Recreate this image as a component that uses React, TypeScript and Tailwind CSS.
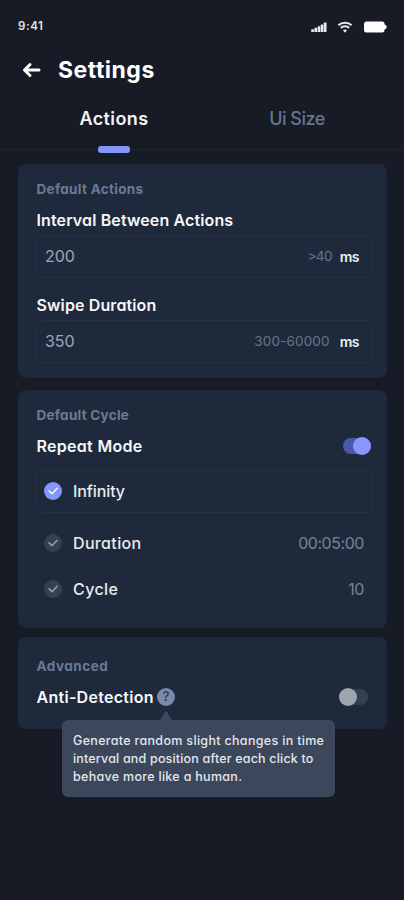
import type { ReactNode } from "react";

function StatusBar() {
  return (
    <div className="flex h-[54px] items-center pl-[18px] pr-[17px]">
      <span className="text-[11.5px] font-semibold tracking-[0.6px] text-[#e4e6ea]">9:41</span>
      <div className="ml-auto flex items-center">
        <svg width="16" height="12" viewBox="0 0 16 12" fill="#e8e9ec" className="mr-[10px]">
          <rect x="0.2" y="8.2" width="2.7" height="2.8" rx="0.6" />
          <rect x="3.4" y="6.8" width="2.7" height="4.2" rx="0.6" />
          <rect x="6.6" y="5.3" width="2.7" height="5.7" rx="0.6" />
          <rect x="9.7" y="3.6" width="2.7" height="7.4" rx="0.6" />
          <rect x="12.8" y="1.6" width="2.7" height="9.4" rx="0.6" />
        </svg>
        <svg width="16" height="12" viewBox="0 0 16 12" fill="none" stroke="#e8e9ec" strokeWidth="2.2" className="mr-[11px]">
          <path d="M1.4 4.300C5 .9 11 .9 14.600 4.300" />
          <path d="M3.900 6.900c2.300-2.200 5.900-2.200 8.200 0" />
          <path d="M8 11.700 5.900 9.300c1.200-1.100 3-1.100 4.200 0z" fill="#e8e9ec" stroke="none" />
        </svg>
        <svg width="23" height="12" viewBox="0 0 23 12" fill="#ffffff">
          <rect x="0" y="0.5" width="20.5" height="11" rx="2.5" />
          <path d="M20 3.500c2 .3 2.700 1.300 2.700 2.500s-.7 2.200-2.700 2.500z" />
        </svg>
      </div>
    </div>
  );
}

function Card({ className, children }: { className: string; children: ReactNode }) {
  return (
    <section className={`mx-[18px] w-[369px] rounded-[8px] bg-[#1e2a3b] px-[18px] ${className}`}>
      {children}
    </section>
  );
}

function Label({ className, children }: { className: string; children: ReactNode }) {
  return (
    <h2 className={`flex h-5 items-center whitespace-nowrap pl-[0.5px] text-[13.5px] font-bold text-[#6b7a93] ${className}`}>
      {children}
    </h2>
  );
}

function Title({ className, children }: { className: string; children: ReactNode }) {
  return (
    <span className={`whitespace-nowrap pl-[0.5px] text-[16px] leading-6 font-semibold text-[#f6f7f9] ${className}`}>{children}</span>
  );
}

function Field({ value, hint, hintClass }: { value: string; hint: string; hintClass: string }) {
  return (
    <div className="flex h-[43px] w-[337px] items-center rounded-[6px] border border-[#243143] pb-px pl-[8px] pr-[13px]">
      <span className="text-[16px] tracking-[-0.1px] text-[#9ca6b7]">{value}</span>
      <span className={`ml-auto pt-px text-[13.5px] text-[#66748c] ${hintClass}`}>{hint}</span>
      <span className="pt-px text-[14px] font-semibold tracking-[-0.5px] text-[#eef0f3]">ms</span>
    </div>
  );
}

function Tick({ active }: { active?: boolean }) {
  return (
    <svg width="18" height="18" viewBox="0 0 18 18" className="mr-[11px] shrink-0">
      <circle cx="9" cy="9" r="9" fill={active ? "#8296fb" : "#344150"} />
      <path
        d="M5 8.900 8 11.800 13.200 6.300"
        fill="none"
        stroke={active ? "#f4f6ff" : "#98a1ab"}
        strokeWidth="1.5"
        strokeLinecap="round"
        strokeLinejoin="round"
      />
    </svg>
  );
}

function Option({ name, nameClass, value, active, className }: {
  name: string;
  nameClass: string;
  value?: string;
  active?: boolean;
  className: string;
}) {
  return (
    <div className={`flex w-[337px] items-center rounded-[6px] border pl-[7px] pr-[8px] ${className}`}>
      <Tick active={active} />
      <span className={`text-[16px] font-medium text-[#e9ecf0] ${nameClass}`}>{name}</span>
      <span className="ml-auto text-[16px] tracking-[-0.45px] text-[#75839a]">{value}</span>
    </div>
  );
}

function Switch({ on }: { on?: boolean }) {
  return on ? (
    <div className="ml-auto mr-[-2px] flex h-[16px] w-[28px] items-center justify-end rounded-full bg-[#4a58a8]">
      <span className="h-[18px] w-[18px] shrink-0 rounded-full bg-[#8797fc]" />
    </div>
  ) : (
    <div className="ml-auto mr-[1px] flex h-[16px] w-[29px] items-center rounded-full bg-[#344050]">
      <span className="h-[18px] w-[18px] shrink-0 rounded-full bg-[#9da5b0]" />
    </div>
  );
}

export default function App() {
  return (
    <main className="h-[900px] w-[404px] overflow-hidden bg-[#171b25] font-['Inter','Open_Sans',sans-serif] [font-feature-settings:'cv11']">
      <StatusBar />
      <header className="flex h-8 items-center pl-[22px]">
        <svg width="20" height="16" viewBox="0 0 20 16" fill="none" stroke="#fff" strokeWidth="3" strokeLinecap="round" strokeLinejoin="round">
          <path d="M17 8H2.500M8 2.500 2.500 8 8 13.500" />
        </svg>
        <h1 className="ml-[16px] pt-px text-[23px] font-bold tracking-[0.5px] text-white">Settings</h1>
      </header>
      <nav className="flex h-[64px] border-b border-[#1e2532]">
        <div className="flex w-[228px] flex-col items-center">
          <span className="mt-[19px] text-[18px] leading-7 font-semibold tracking-[0.4px] text-[#f3f4f6]">Actions</span>
          <span className="mt-[13px] h-[7px] w-[32px] shrink-0 rounded-[3px] bg-[#8296fb]" />
        </div>
        <div className="w-[138px] text-center">
          <span className="mt-[19px] inline-block text-[18px] leading-7 font-medium tracking-[-0.5px] text-[#68758b]">Ui Size</span>
        </div>
      </nav>

      <Card className="mt-[14px] h-[214px] pt-[15px]">
        <Label className="tracking-[0.3px]">Default Actions</Label>
        <div className="mt-[9px] h-[27px]"><Title className="tracking-[0.12px]">Interval Between Actions</Title></div>
        <Field value="200" hint=">40" hintClass="mr-[8px] tracking-[-0.7px]" />
        <div className="mt-[15px] h-[27px]"><Title className="tracking-[0.12px]">Swipe Duration</Title></div>
        <Field value="350" hint="300-60000" hintClass="mr-[10px] tracking-[0.15px]" />
      </Card>

      <Card className="mt-[12px] h-[238px] pt-[15px]">
        <Label className="tracking-[0.25px]">Default Cycle</Label>
        <div className="mt-[9px] flex h-6 items-center">
          <Title className="tracking-[0.3px]">Repeat Mode</Title>
          <Switch on />
        </div>
        <Option active name="Infinity" nameClass="tracking-[-0.1px]" className="mt-[12px] h-[43px] border-[#243143] pb-px" />
        <Option name="Duration" nameClass="tracking-[0.35px]" value="00:05:00" className="mt-[7px] h-[46px] border-transparent" />
        <Option name="Cycle" nameClass="tracking-[0.4px]" value="10" className="h-[46px] border-transparent" />
      </Card>

      <Card className="mt-[9px] h-[92px] pt-[19px]">
        <Label className="tracking-[0.5px]">Advanced</Label>
        <div className="mt-[9px] flex h-6 items-center">
          <Title className="w-[121px] tracking-[0.28px]">Anti-Detection</Title>
          <span className="relative flex h-[18px] w-[18px] shrink-0 items-center justify-center rounded-full bg-[#7b89a8] text-[13px] font-semibold text-[#303c53]">
            ?
            <svg width="12" height="9" viewBox="0 0 12 9" className="absolute left-[3px] top-[23px]" fill="#3c475c">
              <path d="M0 9 4.800 1Q6-.5 7.200 1L12 9z" />
            </svg>
            <span className="absolute left-[-95px] top-[32px] h-[77px] w-[273px] whitespace-nowrap rounded-[6px] bg-[#3c475c] pl-[11px] pt-[12px] text-[12.5px] leading-[18px] font-medium text-[#e3e6eb]">
              <span className="block tracking-[0.32px]">Generate random slight changes in time</span>
              <span className="block tracking-[0.18px]">interval and position after each click to</span>
              <span className="block tracking-[0.3px]">behave more like a human.</span>
            </span>
          </span>
          <Switch />
        </div>
      </Card>
    </main>
  );
}
